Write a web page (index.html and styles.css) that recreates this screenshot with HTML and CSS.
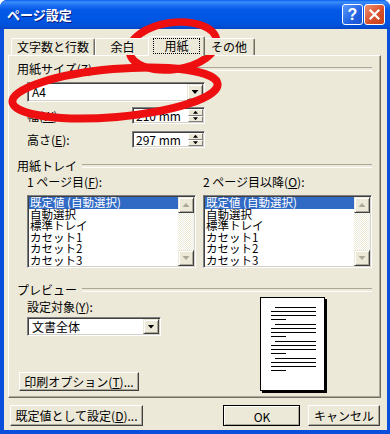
FILE: index.html
```html
<!DOCTYPE html>
<html lang="ja">
<head>
    <meta charset="UTF-8">
    <meta name="viewport" content="width=device-width, initial-scale=1.0">
    <title>ページ設定</title>
    <link rel="stylesheet" href="styles.css">
</head>
<body>
    <div class="window">
        <div class="titlebar">
            <span class="title">ページ設定</span>
            <div class="caption-buttons">
                <span class="cap-btn help">?</span>
                <span class="cap-btn close">
                    <svg width="13" height="13" viewBox="0 0 13 13"><path d="M2.5 2.5 L10.5 10.5 M10.5 2.5 L2.5 10.5" stroke="#fff" stroke-width="2.2" stroke-linecap="square"/></svg>
                </span>
            </div>
        </div>

        <div class="client">
            <div class="tabs">
                <div class="tab tab-1">文字数と行数</div>
                <div class="tab tab-2">余白</div>
                <div class="tab tab-3 active"><span class="focus">用紙</span></div>
                <div class="tab tab-4">その他</div>
            </div>

            <div class="panel">
                <div class="group">用紙サイズ(<u>Z</u>)</div>
                <div class="indent">
                    <div class="combo combo-size">
                        <span class="combo-text">A4</span>
                        <span class="drop-btn"></span>
                    </div>
                    <div class="field-row first">
                        <span>幅(<u>W</u>):</span>
                        <div class="spin">
                            <span class="spin-text">210 mm</span>
                            <span class="spin-btns"><span class="spin-up"></span><span class="spin-down"></span></span>
                        </div>
                    </div>
                    <div class="field-row">
                        <span>高さ(<u>E</u>):</span>
                        <div class="spin">
                            <span class="spin-text">297 mm</span>
                            <span class="spin-btns"><span class="spin-up"></span><span class="spin-down"></span></span>
                        </div>
                    </div>
                </div>

                <div class="group group-tray">用紙トレイ</div>
                <div class="trays">
                    <div class="tray">
                        <div class="tray-label">1 ページ目(<u>F</u>):</div>
                        <div class="listbox">
                            <ul class="items">
                                <li class="selected">既定値 (自動選択)</li>
                                <li>自動選択</li>
                                <li>標準トレイ</li>
                                <li>カセット1</li>
                                <li>カセット2</li>
                                <li>カセット3</li>
                            </ul>
                            <div class="vscroll">
                                <span class="sb-btn sb-up"></span>
                                <span class="sb-track"></span>
                                <span class="sb-btn sb-down"></span>
                            </div>
                        </div>
                    </div>
                    <div class="tray">
                        <div class="tray-label">2 ページ目以降(<u>O</u>):</div>
                        <div class="listbox">
                            <ul class="items">
                                <li class="selected">既定値 (自動選択)</li>
                                <li>自動選択</li>
                                <li>標準トレイ</li>
                                <li>カセット1</li>
                                <li>カセット2</li>
                                <li>カセット3</li>
                            </ul>
                            <div class="vscroll">
                                <span class="sb-btn sb-up"></span>
                                <span class="sb-track"></span>
                                <span class="sb-btn sb-down"></span>
                            </div>
                        </div>
                    </div>
                </div>

                <div class="group group-preview">プレビュー</div>
                <div class="preview">
                    <div class="preview-left">
                        <div class="apply-label">設定対象(<u>Y</u>):</div>
                        <div class="combo combo-apply">
                            <span class="combo-text">文書全体</span>
                            <span class="drop-btn"></span>
                        </div>
                        <button class="btn btn-print">印刷オプション(<u>T</u>)...</button>
                    </div>
                    <div class="page">
                        <div class="para"><i class="ln ln-first"></i><i class="ln"></i><i class="ln"></i><i class="ln ln-last"></i></div>
                        <div class="para"><i class="ln ln-first"></i><i class="ln"></i><i class="ln"></i><i class="ln ln-last"></i></div>
                        <div class="para"><i class="ln ln-first"></i><i class="ln"></i><i class="ln"></i><i class="ln ln-last"></i></div>
                        <div class="para"><i class="ln ln-first"></i><i class="ln"></i><i class="ln"></i><i class="ln ln-last"></i></div>
                    </div>
                </div>
            </div>

            <div class="footer">
                <button class="btn btn-default">既定値として設定(<u>D</u>)...</button>
                <button class="btn btn-ok">OK</button>
                <button class="btn btn-cancel">キャンセル</button>
            </div>
        </div>

        <!-- red hand-drawn marks over the dialog -->
        <svg class="marks" width="390" height="434" viewBox="0 0 390 434">
            <ellipse cx="173" cy="46" rx="44" ry="23.5" transform="rotate(-8 173 46)" fill="none" stroke="#ee1010" stroke-width="7.5"/>
            <ellipse cx="115" cy="93" rx="103" ry="24" transform="rotate(-5 115 93)" fill="none" stroke="#ee1010" stroke-width="8"/>
        </svg>
    </div>
</body>
</html>
```

FILE: styles.css
```css
* {
    box-sizing: border-box;
}
body {
    margin: 0;
    width: 390px;
    height: 434px;
    overflow: hidden;
    font-family: "Noto Sans CJK JP", sans-serif;
    font-size: 12px;
    color: #000;
}
u {
    text-decoration: underline;
    text-underline-offset: 1px;
}

.window {
    position: relative;
    width: 390px;
    height: 434px;
    display: flex;
    flex-direction: column;
    background: #0a4fdc;
    border-radius: 7px 7px 0 0;
    overflow: hidden;
}
.titlebar {
    flex: none;
    height: 29px;
    display: flex;
    align-items: center;
    justify-content: space-between;
    padding: 0 5px 0 7px;
    background: linear-gradient(#0a5ff0 0px, #3d8ef9 2px, #1f72f4 5px, #0458e6 10px, #0055e3 20px, #0050d8 26px, #0843c4 29px);
}
.title {
    color: #fff;
    font-weight: bold;
    font-size: 13px;
    text-shadow: 1px 1px #0a1a7a;
}
.caption-buttons {
    display: flex;
    gap: 1px;
}
.cap-btn {
    width: 21px;
    height: 21px;
    border: 1px solid #fff;
    border-radius: 3px;
    display: flex;
    align-items: center;
    justify-content: center;
}
.help {
    background: linear-gradient(135deg, #5b9bfb, #2162e3 60%, #1a53cf);
    color: #fff;
    font: bold 16px "Liberation Sans", sans-serif;
}
.close {
    background: linear-gradient(135deg, #f09272, #d9502b 55%, #c4401c);
}

.client {
    flex: 1;
    margin: 0 3px 4px 4px;
    background: #ece9d8;
    display: flex;
    flex-direction: column;
}

/* tabs */
.tabs {
    position: relative;
    z-index: 1;
    display: flex;
    align-items: flex-end;
    height: 19px;
    margin: 7px 0 0 7px;
}
.tab {
    height: 17px;
    border: 1px solid;
    border-bottom: none;
    border-color: #fff #716f64 transparent #fff;
    box-shadow: inset -1px 0 #aca899;
    border-radius: 2px 2px 0 0;
    background: #ece9d8;
    text-align: center;
    line-height: 16px;
}
.tab-1 { width: 84px; }
.tab-2 { width: 55px; }
.tab-4 { width: 52px; }
.tab-3.active {
    position: relative;
    z-index: 2;
    width: 57px;
    height: 20px;
    margin: 0 -2px -1px -2px;
}
.focus {
    display: block;
    height: 16px;
    margin: 1px 4px 0 4px;
    border: 1px dotted #000;
    line-height: 14px;
}

/* panel */
.panel {
    width: 373px;
    height: 343px;
    margin-left: 4px;
    padding: 0 8px;
    border: 1px solid;
    border-color: #fff #716f64 #716f64 #fff;
    box-shadow: inset -1px -1px #aca899;
}
.group {
    display: flex;
    align-items: center;
    height: 14px;
    margin-top: 6px;
    line-height: 14px;
    white-space: nowrap;
}
.group::after {
    content: "";
    flex: 1;
    height: 2px;
    margin-left: 5px;
    border-top: 1px solid #aca899;
    border-bottom: 1px solid #fff;
}
.group-tray { margin-top: 11px; }
.group-preview { margin-top: 15px; }

.indent {
    width: 178px;
    margin-left: 10px;
}

/* sunken controls */
.combo, .spin, .listbox {
    border: 1px solid;
    border-color: #808080 #fff #fff #808080;
    box-shadow: inset 1px 1px #404040, inset -1px -1px #d4d0c8;
    background: #fff;
    padding: 1px;
    display: flex;
}
.combo {
    height: 20px;
    align-items: center;
}
.combo-size {
    margin-top: 6px;
}
.combo-text {
    flex: 1;
    padding-left: 3px;
    line-height: 16px;
}
.drop-btn, .sb-btn {
    width: 16px;
    height: 16px;
    display: flex;
    align-items: center;
    justify-content: center;
    background: #ece9d8;
    border: 1px solid;
    border-color: #ece9d8 #404040 #404040 #ece9d8;
    box-shadow: inset 1px 1px #fff, inset -1px -1px #aca899;
}
.drop-btn::before {
    content: "";
    width: 7px;
    height: 4px;
    background: #000;
    clip-path: polygon(0 0, 100% 0, 50% 100%);
}

.field-row {
    display: flex;
    align-items: center;
    justify-content: space-between;
    margin-top: 7px;
}
.field-row.first {
    margin-top: 5px;
}
.spin {
    width: 73px;
    height: 17px;
}
.spin-text {
    flex: 1;
    padding-left: 2px;
    line-height: 13px;
}
.spin-btns {
    width: 15px;
    display: flex;
    flex-direction: column;
}
.spin-up, .spin-down {
    flex: 1;
    display: flex;
    align-items: center;
    justify-content: center;
    background: #ece9d8;
    border: 1px solid;
    border-color: #fff #808080 #808080 #fff;
}
.spin-up::before, .spin-down::before {
    content: "";
    width: 5px;
    height: 3px;
    background: #000;
}
.spin-up::before { clip-path: polygon(50% 0, 100% 100%, 0 100%); }
.spin-down::before { clip-path: polygon(0 0, 100% 0, 50% 100%); }

/* trays */
.trays {
    display: grid;
    grid-template-columns: 169px 169px;
    column-gap: 7px;
    margin: 2px 0 0 10px;
}
.tray-label {
    height: 14px;
    line-height: 14px;
}
.listbox {
    height: 73px;
    margin-top: 6px;
    overflow: hidden;
}
.items {
    flex: 1;
    margin: 0;
    padding: 0;
    list-style: none;
    overflow: hidden;
}
.items li {
    height: 11.5px;
    line-height: 11.5px;
    font-size: 11.5px;
    padding-left: 1px;
    white-space: nowrap;
}
.items li.selected {
    background: #316ac5;
    color: #fff;
}
.vscroll {
    width: 16px;
    display: flex;
    flex-direction: column;
}
.sb-track {
    flex: 1;
    background-color: #fff;
    background-image: repeating-conic-gradient(#ece9d8 0 25%, #fff 0 50%);
    background-size: 2px 2px;
}
.sb-btn::before {
    content: "";
    width: 7px;
    height: 4px;
    background: #aca899;
    filter: drop-shadow(1px 1px 0 #fff);
}
.sb-up::before { clip-path: polygon(50% 0, 100% 100%, 0 100%); }
.sb-down::before { clip-path: polygon(0 0, 100% 0, 50% 100%); }

/* preview */
.preview {
    display: flex;
    height: 100px;
}
.preview-left {
    width: 243px;
    display: flex;
    flex-direction: column;
    align-items: flex-start;
}
.apply-label {
    height: 14px;
    line-height: 14px;
    margin: 3px 0 0 10px;
}
.combo-apply {
    width: 134px;
    height: 19px;
    margin: 3px 0 0 10px;
}
.combo-apply .drop-btn {
    height: 15px;
}
.btn-print {
    width: 120px;
    height: 19px;
    margin: auto 0 6px 2px;
}
.page {
    width: 65px;
    height: 94px;
    padding: 9px 8px 0 10px;
    background: #fff;
    border: 1px solid #000;
    box-shadow: 2px 2px 0 #000;
}
.para {
    margin-bottom: 4px;
}
.ln {
    display: block;
    height: 1px;
    margin-bottom: 3px;
    background: #000;
}
.ln-first { margin-left: 4px; }
.ln-last { width: 15px; }

/* buttons */
.btn {
    font-family: "Noto Sans CJK JP", sans-serif;
    font-size: 12px;
    color: #000;
    padding: 0;
    line-height: 15px;
    background: #ece9d8;
    border: 1px solid;
    border-color: #fff #404040 #404040 #fff;
    box-shadow: inset -1px -1px #aca899;
}
.footer {
    display: flex;
    height: 21px;
    margin-top: 7px;
    padding: 0 7px 0 6px;
}
.btn-default { width: 133px; }
.btn-ok {
    width: 77px;
    margin-left: auto;
    outline: 1px solid #000;
    outline-offset: -1px;
    border-width: 2px 1px 1px 2px;
}
.btn-cancel {
    width: 72px;
    margin-left: 8px;
}

.marks {
    position: absolute;
    top: 0;
    left: 0;
    pointer-events: none;
}
```
